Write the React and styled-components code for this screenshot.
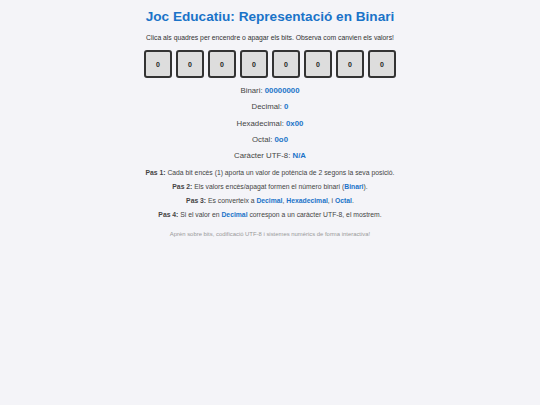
import React, { useState } from "react";
import styled, { createGlobalStyle } from "styled-components";

const GlobalStyle = createGlobalStyle`
  body {
    margin: 0;
    background: #f4f4f8;
    font-family: "Liberation Sans", Arial, sans-serif;
    color: #333;
  }
`;

const Page = styled.main`
  display: flex;
  flex-direction: column;
  align-items: center;
  padding-top: 9px;
`;

const Title = styled.h1`
  margin: 0;
  font-size: 13.6px;
  line-height: 16px;
  font-weight: bold;
  color: #1a73c8;
`;

const Intro = styled.p`
  margin: 9px 0 0;
  font-size: 6.8px;
  line-height: 8px;
  color: #333;
`;

const BitRow = styled.div`
  display: flex;
  gap: 4px;
  margin-top: 8px;
`;

const Bit = styled.button`
  width: 28px;
  height: 28px;
  box-sizing: border-box;
  border: 2px solid #333;
  border-radius: 3px;
  background: ${(p) => (p.$on ? "#1a73c8" : "#dddddd")};
  color: ${(p) => (p.$on ? "#fff" : "#222")};
  font-family: inherit;
  font-size: 7px;
  font-weight: bold;
  padding: 0;
  cursor: pointer;
`;

const Values = styled.div`
  display: flex;
  flex-direction: column;
  align-items: center;
  gap: 8px;
  margin-top: 9px;
`;

const ValueLine = styled.div`
  font-size: 7.8px;
  line-height: 8.3px;
  color: #444;
`;

const Accent = styled.span`
  color: #1a73c8;
  font-weight: bold;
`;

const Steps = styled.div`
  display: flex;
  flex-direction: column;
  align-items: center;
  gap: 6px;
  margin-top: 9px;
`;

const Step = styled.p`
  margin: 0;
  font-size: 6.8px;
  line-height: 8px;
  color: #444;
`;

const StepLabel = styled.b`
  color: #444;
`;

const Footer = styled.p`
  margin: 12px 0 0;
  font-size: 5.9px;
  color: #999;
`;

export default function App() {
  const [bits, setBits] = useState([0, 0, 0, 0, 0, 0, 0, 0]);
  const value = bits.reduce((acc, b) => acc * 2 + b, 0);
  const binary = bits.join("");
  const hex = "0x" + value.toString(16).toUpperCase().padStart(2, "0");
  const octal = "0o" + value.toString(8);
  const utf8 = value >= 32 && value < 127 ? String.fromCharCode(value) : "N/A";

  const toggle = (i) =>
    setBits((prev) => prev.map((b, j) => (j === i ? 1 - b : b)));

  return (
    <>
      <GlobalStyle />
      <Page>
        <Title>Joc Educatiu: Representació en Binari</Title>
        <Intro>
          Clica als quadres per encendre o apagar els bits. Observa com canvien
          els valors!
        </Intro>
        <BitRow>
          {bits.map((b, i) => (
            <Bit key={i} $on={b === 1} onClick={() => toggle(i)}>
              {b}
            </Bit>
          ))}
        </BitRow>
        <Values>
          <ValueLine>
            Binari: <Accent>{binary}</Accent>
          </ValueLine>
          <ValueLine>
            Decimal: <Accent>{value}</Accent>
          </ValueLine>
          <ValueLine>
            Hexadecimal: <Accent>{hex}</Accent>
          </ValueLine>
          <ValueLine>
            Octal: <Accent>{octal}</Accent>
          </ValueLine>
          <ValueLine>
            Caràcter UTF-8: <Accent>{utf8}</Accent>
          </ValueLine>
        </Values>
        <Steps>
          <Step>
            <StepLabel>Pas 1:</StepLabel> Cada bit encès (1) aporta un valor de
            potència de 2 segons la seva posició.
          </Step>
          <Step>
            <StepLabel>Pas 2:</StepLabel> Els valors encès/apagat formen el
            número binari (<Accent>Binari</Accent>).
          </Step>
          <Step>
            <StepLabel>Pas 3:</StepLabel> Es converteix a <Accent>Decimal</Accent>,{" "}
            <Accent>Hexadecimal</Accent>, i <Accent>Octal</Accent>.
          </Step>
          <Step>
            <StepLabel>Pas 4:</StepLabel> Si el valor en <Accent>Decimal</Accent>{" "}
            correspon a un caràcter UTF-8, el mostrem.
          </Step>
        </Steps>
        <Footer>
          Aprèn sobre bits, codificació UTF-8 i sistemes numèrics de forma
          interactiva!
        </Footer>
      </Page>
    </>
  );
}
